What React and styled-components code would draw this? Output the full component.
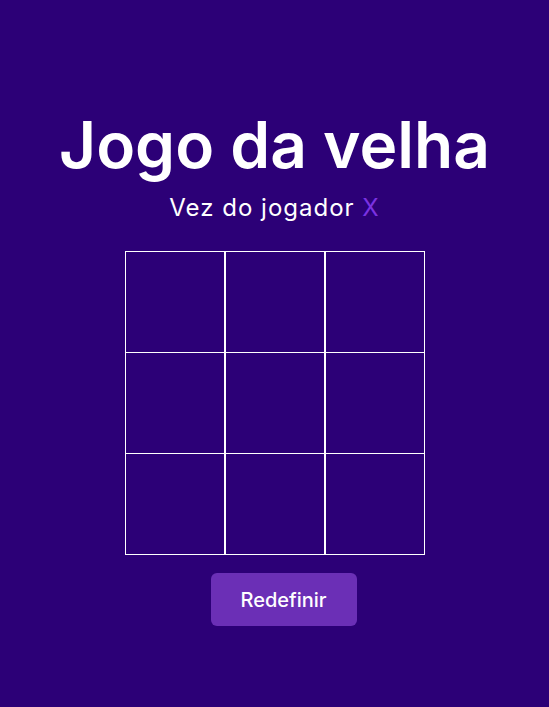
import React, { useState } from "react";
import styled, { createGlobalStyle } from "styled-components";

const Global = createGlobalStyle`
  * { box-sizing: border-box; }
  html, body { margin: 0; padding: 0; background: #2c0077; }
  body { font-family: "Inter", "Open Sans", sans-serif; color: #ffffff; }
`;

const Page = styled.main`
  min-height: 100vh;
  display: flex;
  flex-direction: column;
  align-items: center;
  justify-content: flex-start;
  padding-top: 102px;
`;

const Title = styled.h1`
  margin: 0;
  font-size: 64px;
  font-weight: 600;
  line-height: 86px;
`;

const Turn = styled.p`
  margin: 2px 0 25px;
  font-size: 24px;
  font-weight: 400;
  letter-spacing: 1px;
  line-height: 36px;
`;

const Mark = styled.span`
  color: #7b32e2;
`;

const Board = styled.div`
  display: grid;
  grid-template-columns: repeat(3, 100px);
`;

const Cell = styled.button`
  width: 100px;
  height: ${(p) => (p.$last ? 102 : 101)}px;
  background: transparent;
  border: 1px solid #ffffff;
  border-bottom-width: ${(p) => (p.$last ? 1 : 0)}px;
  padding: 0;
  margin: 0;
  cursor: pointer;
  color: #fff;
  font-size: 48px;
`;

const Reset = styled.button`
  margin-top: 18px;
  margin-left: 18px;
  width: 146px;
  height: 53px;
  border: none;
  border-radius: 6px;
  background: #6b2fb6;
  color: #ffffff;
  font-family: "Inter", "Open Sans", sans-serif;
  font-size: 20px;
  font-weight: 500;
  cursor: pointer;
`;

export default function App() {
  const [cells, setCells] = useState(Array(9).fill(""));
  const [player, setPlayer] = useState("X");
  const play = (i) => {
    if (cells[i]) return;
    const next = [...cells];
    next[i] = player;
    setCells(next);
    setPlayer(player === "X" ? "O" : "X");
  };
  return (
    <>
      <Global />
      <Page>
        <Title>Jogo da velha</Title>
        <Turn>
          Vez do jogador <Mark>{player}</Mark>
        </Turn>
        <Board>
          {cells.map((c, i) => (
            <Cell key={i} $last={i >= 6} onClick={() => play(i)}>
              {c}
            </Cell>
          ))}
        </Board>
        <Reset onClick={() => { setCells(Array(9).fill("")); setPlayer("X"); }}>
          Redefinir
        </Reset>
      </Page>
    </>
  );
}
